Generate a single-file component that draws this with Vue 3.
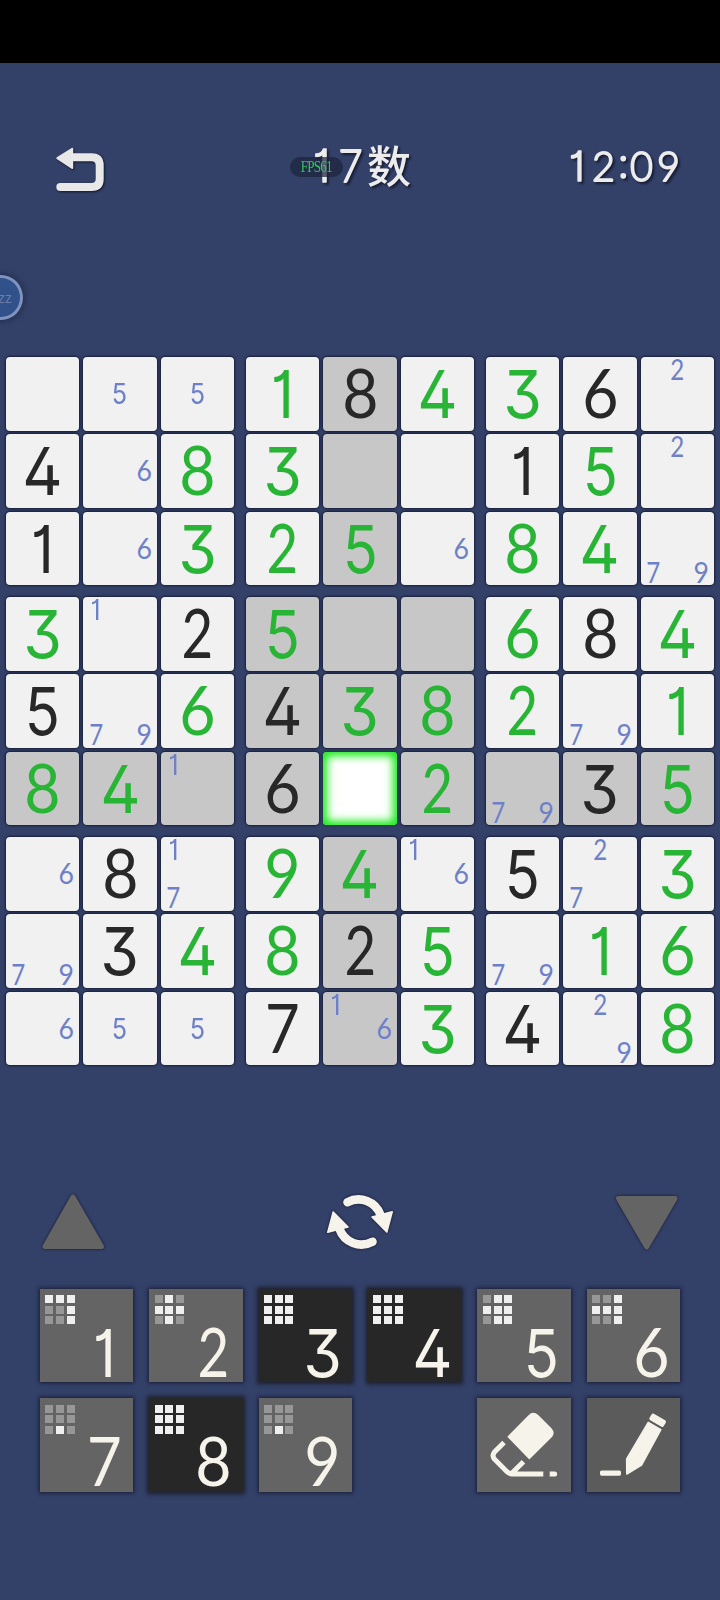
<script setup>
// Each cell: "g5" = filled by the player, "k5" = given clue, "n79" = pencil notes, "" = empty
const rows = [
  ['', 'n5', 'n5', 'g1', 'k8', 'g4', 'g3', 'k6', 'n2'],
  ['k4', 'n6', 'g8', 'g3', '', '', 'k1', 'g5', 'n2'],
  ['k1', 'n6', 'g3', 'g2', 'g5', 'n6', 'g8', 'g4', 'n79'],
  ['g3', 'n1', 'k2', 'g5', '', '', 'g6', 'k8', 'g4'],
  ['k5', 'n79', 'g6', 'k4', 'g3', 'g8', 'g2', 'n79', 'g1'],
  ['g8', 'g4', 'n1', 'k6', '', 'g2', 'n79', 'k3', 'g5'],
  ['n6', 'k8', 'n17', 'g9', 'g4', 'n16', 'k5', 'n27', 'g3'],
  ['n79', 'k3', 'g4', 'g8', 'k2', 'g5', 'n79', 'g1', 'g6'],
  ['n6', 'n5', 'n5', 'k7', 'n16', 'g3', 'k4', 'n29', 'g8'],
]
const selected = { r: 5, c: 4 }

const boxes = Array.from({ length: 9 }, (_, b) =>
  Array.from({ length: 9 }, (_, i) => {
    const r = Math.floor(b / 3) * 3 + Math.floor(i / 3)
    const c = (b % 3) * 3 + (i % 3)
    const v = rows[r][c]
    return {
      kind: v[0] || 'e',
      digits: v.slice(1),
      selected: r === selected.r && c === selected.c,
      shaded: r === selected.r || c === selected.c || b === 4,
    }
  })
)

const keys = [
  { d: 1, m: '111001001' },
  { d: 2, m: '010111010' },
  { d: 3, m: '111111111' },
  { d: 4, m: '111111111' },
  { d: 5, m: '011111011' },
  { d: 6, m: '001111001' },
  { d: 7, m: '000000010' },
  { d: 8, m: '111111111' },
  { d: 9, m: '000000010' },
]
const isDone = (k) => !k.m.includes('0')
</script>

<template>
  <main class="screen">
    <div class="notch"></div>

    <header class="top">
      <svg class="back" width="56" height="52" viewBox="52 143 56 52">
        <path d="M72 157.3H91.5Q99.7 157.3 99.7 165.5V179Q99.7 187 91.5 187H60.3" fill="none" stroke="#e8e8e8" stroke-width="8" stroke-linecap="round" />
        <path d="M57.3 158.2L72.2 148.8V168Z" fill="#e8e8e8" stroke="#e8e8e8" stroke-width="2" stroke-linejoin="round" />
      </svg>
      <div class="title">
        <svg width="130" height="60" viewBox="290 135 130 60">
          <g class="head-text">
            <text x="312" y="182" font-size="45">1</text>
            <text class="lato" x="337.500" y="182" font-size="45" textLength="24" lengthAdjust="spacingAndGlyphs">7</text>
          </g>
          <text class="cjk" x="366" y="182.500" font-size="44">数</text>
        </svg>
        <div class="fps"><span>FPS61</span></div>
      </div>
      <svg class="clock" width="130" height="60" viewBox="560 135 130 60">
        <g class="head-text" font-size="41">
          <text x="569" y="181">1</text>
          <text class="lato" x="592" y="181" font-size="42" textLength="23" lengthAdjust="spacingAndGlyphs">2</text>
          <text x="617.500" y="178">:</text>
          <text class="lato" x="630" y="181" font-size="42" textLength="23" lengthAdjust="spacingAndGlyphs">0</text>
          <text class="lato" x="657" y="181" font-size="42" textLength="23" lengthAdjust="spacingAndGlyphs">9</text>
        </g>
      </svg>
    </header>

    <div class="bubble"><span>zz</span></div>

    <section class="board">
      <div v-for="(box, b) in boxes" :key="b" class="box">
        <div
          v-for="(cell, i) in box"
          :key="i"
          class="cell"
          :class="{ shaded: cell.shaded, selected: cell.selected }"
        >
          <span v-if="cell.kind === 'g' || cell.kind === 'k'" class="digit" :class="[cell.kind, 'd' + cell.digits]">{{ cell.digits }}</span>
          <div v-else-if="cell.kind === 'n'" class="notes">
            <span v-for="n in 9" :key="n"><i v-if="cell.digits.includes(n)" :class="'d' + n">{{ n }}</i></span>
          </div>
        </div>
      </div>
    </section>

    <section class="actions">
      <svg class="soft" width="70" height="64" viewBox="38 1190 70 64">
        <path d="M73 1197L45 1246.500H101.500Z" fill="#646464" stroke="#646464" stroke-width="5" stroke-linejoin="round" />
      </svg>
      <svg class="soft" width="74" height="64" viewBox="323 1190 74 64">
        <g>
          <path d="M347.500 1202.300A23.300 23.300 0 0 1 380.500 1215" fill="none" stroke="#f6f3ea" stroke-width="8.600" stroke-linecap="round" />
          <path d="M372 1217L392.200 1211.800L386.800 1232Z" fill="#f6f3ea" stroke="#f6f3ea" stroke-width="1.600" stroke-linejoin="round" />
        </g>
        <g transform="rotate(180 360 1222)">
          <path d="M347.500 1202.300A23.300 23.300 0 0 1 380.500 1215" fill="none" stroke="#f6f3ea" stroke-width="8.600" stroke-linecap="round" />
          <path d="M372 1217L392.200 1211.800L386.800 1232Z" fill="#f6f3ea" stroke="#f6f3ea" stroke-width="1.600" stroke-linejoin="round" />
        </g>
      </svg>
      <svg class="soft" width="70" height="64" viewBox="612 1190 70 64">
        <path d="M618.500 1198.500H675L646.700 1247Z" fill="#646464" stroke="#646464" stroke-width="5" stroke-linejoin="round" />
      </svg>
    </section>

    <section class="pad">
      <button v-for="k in keys" :key="k.d" class="key" :class="{ done: isDone(k) }">
        <span class="mini"><i v-for="(m, j) in k.m" :key="j" :class="{ on: m === '1' }"></i></span>
        <span class="key-digit"><span class="digit" :class="'d' + k.d">{{ k.d }}</span></span>
      </button>
      <button class="key eraser">
        <svg width="93.500" height="93.500" viewBox="0 0 93.500 93.500" fill="#f6f3ea">
          <path d="M30.300 38.800L51.500 17.200Q56 12.600 61 16.800L74.500 30.300Q78.500 35 75 39L52.300 61.500Z" />
          <path d="M27 44.500L17.300 54.200Q14.800 57.500 17.300 61L30.500 74.200Q32.500 75.900 35 75.900H66.300M46.500 63.700L34.500 75.500" fill="none" stroke="#f6f3ea" stroke-width="5" />
          <path d="M72.700 73.400H78Q80.200 73.400 80.200 76T78 78.500H72.700Z" />
        </svg>
      </button>
      <button class="key pencil">
        <svg width="93.500" height="93.500" viewBox="0 0 93.500 93.500" fill="#f6f3ea">
          <path d="M66 17.300L77.300 23.800L75.300 27.200L64 20.700Z" stroke="#f6f3ea" stroke-width="3.400" stroke-linejoin="round" />
          <path d="M61.300 24.400L73.800 31.600L54.500 67L39.800 76L39.700 61Z" stroke="#f6f3ea" stroke-width="1.600" stroke-linejoin="round" />
          <rect x="13" y="72.500" width="21" height="5.200" rx="1.600" />
        </svg>
      </button>
    </section>
  </main>
</template>

<style>
body {
  background: #334068;
}
</style>

<style scoped>
.screen {
  position: relative;
  width: 720px;
  height: 1600px;
  overflow: hidden;
  background: #334068;
  font-family: Inter, Lato, "Liberation Sans", sans-serif;
  font-feature-settings: "ss01", "cv01", "cv02", "cv03", "cv04", "cv09";
}
.notch {
  height: 62.500px;
  background: #000;
}
.top {
  display: flex;
  justify-content: space-between;
  align-items: flex-start;
  box-sizing: border-box;
  height: 294.500px;
  padding: 72.500px 30px 0 52px;
}
.back {
  margin: 8px 0 0;
  filter: drop-shadow(1.5px 1.5px 1px rgba(10, 12, 25, 0.8));
}
.title {
  position: relative;
  width: 130px;
  height: 60px;
  margin-left: 44px;
}
.title svg {
  overflow: visible;
}
.title svg,
.clock {
  filter: drop-shadow(2px 2px 1px rgba(15, 18, 35, 0.75));
}
.head-text {
  fill: #ececec;
  stroke: #ececec;
  stroke-width: 1.4px;
  stroke-linejoin: round;
  font-weight: 300;
}
.lato {
  font-family: Lato, sans-serif;
  stroke-width: 1.8px;
}
.cjk {
  fill: #ececec;
  font-family: "Noto Sans CJK SC", sans-serif;
  font-weight: 500;
}
.fps {
  position: absolute;
  left: -1px;
  top: 22px;
  display: flex;
  align-items: center;
  justify-content: center;
  width: 53px;
  height: 20px;
  border-radius: 10px;
  background: rgba(28, 34, 60, 0.72);
}
.fps span {
  font: 17px/20px "Liberation Serif", serif;
  letter-spacing: -1px;
  color: #2fc75c;
  transform: scaleX(0.77);
}
.bubble {
  position: absolute;
  left: -21px;
  top: 275px;
  display: flex;
  align-items: center;
  justify-content: flex-end;
  box-sizing: border-box;
  width: 44px;
  height: 45px;
  padding-right: 8px;
  border: 3.500px solid #8093bf;
  border-radius: 50%;
  background: #305189;
  box-shadow: 0 0 4px 3px rgba(38, 48, 80, 0.75);
  color: #6b7fa8;
  font-size: 13px;
}
.board {
  display: grid;
  grid-template-columns: repeat(3, 228.600px);
  grid-template-rows: repeat(3, 228.600px);
  gap: 11.400px;
  padding-left: 5.800px;
}
.box {
  display: grid;
  grid-template-columns: repeat(3, 73.600px);
  grid-template-rows: repeat(3, 73.600px);
  gap: 3.800px;
}
.cell {
  display: flex;
  align-items: center;
  justify-content: center;
  border-radius: 4px;
  background: #f1f1f1;
  box-shadow: 0 0 2px 1px rgba(18, 22, 42, 0.8);
}
.cell.shaded {
  background: #c7c7c7;
}
.cell.selected {
  background: #fff;
  box-shadow: inset 0 0 8px 4px #14ea14, 0 0 2px 1px rgba(18, 60, 42, 0.8);
}
.digit {
  font-size: 66.500px;
  line-height: 74px;
  font-weight: 400;
  transform: scaleX(0.87);
}
.digit.g {
  color: #28b535;
}
.digit.k {
  color: #282828;
}
.digit.d3 {
  transform: scaleX(0.94);
}
.digit.d4 {
  transform: scaleX(0.94);
}
.digit.d2,
.digit.d6,
.digit.d7,
.digit.d8,
.digit.d9,
.notes i.d2,
.notes i.d6,
.notes i.d7,
.notes i.d9 {
  font-family: Lato, sans-serif;
}
.digit.d2 {
  transform: translateY(-2.8px) scale(0.82, 1.02);
}
.digit.d7 {
  transform: translateY(-2.8px) scale(0.9, 1.02);
}
.digit.d6,
.digit.d8,
.digit.d9 {
  transform: translateY(-2.8px) scale(0.94, 1.02);
}
.notes {
  display: grid;
  grid-template-columns: repeat(3, 24px);
  grid-template-rows: repeat(3, 24px);
}
.notes span {
  display: flex;
  align-items: center;
  justify-content: center;
}
.notes i {
  font-style: normal;
  font-size: 28px;
  line-height: 24px;
  font-weight: 400;
  color: #6d80c8;
  transform: scaleX(0.9);
}
.notes i.d2,
.notes i.d7 {
  transform: translateY(-1.3px) scaleX(0.86);
}
.notes i.d6,
.notes i.d9 {
  transform: translateY(-1.3px) scaleX(0.95);
}
.actions {
  display: flex;
  justify-content: space-between;
  margin-top: 124.600px;
  padding: 0 38px;
}
.soft {
  filter: drop-shadow(0 0 1.500px rgba(15, 18, 35, 0.9));
}
.pad {
  display: grid;
  grid-template-columns: repeat(6, 93.500px);
  gap: 16px 15.900px;
  padding: 34.700px 0 0 39.800px;
}
.key {
  display: block;
  box-sizing: border-box;
  width: 93.500px;
  height: 93.500px;
  padding: 5.500px 0 4px 5.500px;
  border: 0;
  background: #646464;
  box-shadow: 0 0 4px 1px rgba(15, 18, 35, 0.75);
  color: #f6f3ea;
  font-family: inherit;
  font-feature-settings: inherit;
  text-align: left;
}
.key.done {
  background: #272727;
  box-shadow: 0 0 4px 2px rgba(25, 26, 32, 0.85);
}
.key.eraser {
  grid-column: 5;
  padding: 0;
}
.key.pencil {
  padding: 0;
  background: #5b5b5b;
}
.mini {
  display: grid;
  grid-template-columns: repeat(3, 8px);
  grid-template-rows: repeat(3, 8px);
  gap: 2.700px;
}
.mini i {
  background: #979797;
}
.mini i.on {
  background: #efefef;
}
.key-digit {
  display: flex;
  align-items: center;
  justify-content: center;
  width: 50px;
  height: 50px;
  margin: 3.200px 0 0 33.700px;
}
</style>
